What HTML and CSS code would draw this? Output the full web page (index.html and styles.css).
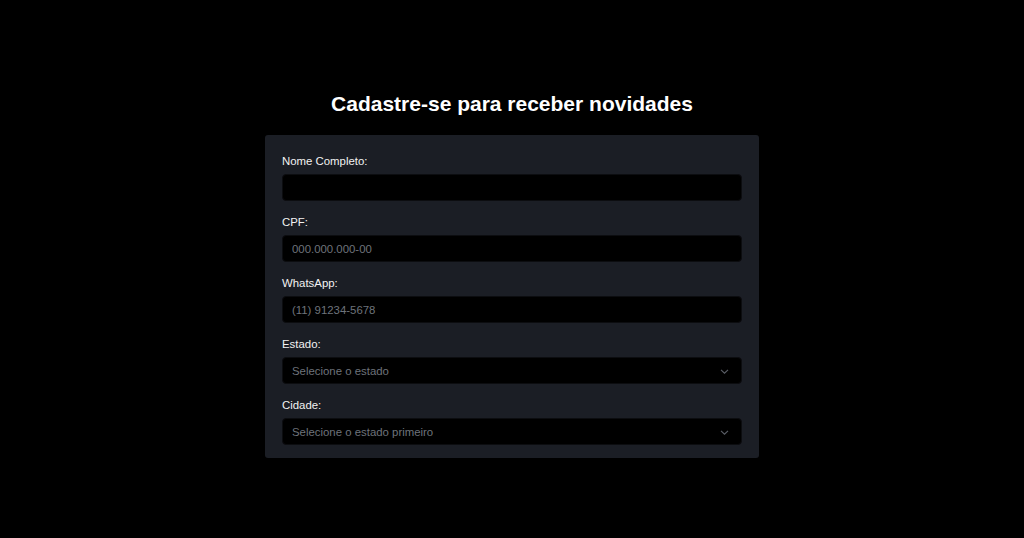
FILE: index.html
```html
<!DOCTYPE html>
<html lang="pt-BR">
<head>
  <meta charset="UTF-8">
  <meta name="viewport" content="width=device-width, initial-scale=1.0">
  <title>Cadastro</title>
  <link rel="stylesheet" href="styles.css">
</head>
<body>
  <main class="container">
    <h1>Cadastre-se para receber novidades</h1>
    <form class="card" id="formCadastro">
      <div class="field">
        <label for="nome">Nome Completo:</label>
        <input type="text" id="nome">
      </div>
      <div class="field">
        <label for="cpf">CPF:</label>
        <input type="text" id="cpf" placeholder="000.000.000-00">
      </div>
      <div class="field">
        <label for="whatsapp">WhatsApp:</label>
        <input type="text" id="whatsapp" placeholder="(11) 91234-5678">
      </div>
      <div class="field">
        <label for="estado">Estado:</label>
        <div class="select-wrap">
          <select id="estado">
            <option value="">Selecione o estado</option>
          </select>
          <svg class="chevron" width="9" height="5" viewBox="0 0 9 5"><path d="M1 0.8l3.5 3.4 3.5-3.4" fill="none" stroke="#5a5e66" stroke-width="1.1"/></svg>
        </div>
      </div>
      <div class="field">
        <label for="cidade">Cidade:</label>
        <div class="select-wrap">
          <select id="cidade">
            <option value="">Selecione o estado primeiro</option>
          </select>
          <svg class="chevron" width="9" height="5" viewBox="0 0 9 5"><path d="M1 0.8l3.5 3.4 3.5-3.4" fill="none" stroke="#5a5e66" stroke-width="1.1"/></svg>
        </div>
      </div>
    </form>
  </main>
</body>
</html>
```

FILE: styles.css
```css
body {
  margin: 0;
  background: #000;
  color: #fff;
  font-family: 'Liberation Sans', Arial, sans-serif;
}
.container {
  width: 494px;
  margin: 0 auto;
  padding-top: 92px;
}
h1 {
  margin: 0 0 19px;
  font-size: 21px;
  line-height: 24px;
  text-align: center;
  font-weight: bold;
}
.card {
  background: #1b1e25;
  border-radius: 3px;
  padding: 19px 17px 0;
  overflow: hidden;
}
.field {
  margin-bottom: 14px;
}
.field:last-child {
  margin-bottom: 13px;
}
.field label {
  display: block;
  font-size: 11.4px;
  line-height: 15px;
  margin-bottom: 5px;
  color: #f2f2f2;
}
.field input, .field select {
  display: block;
  width: 100%;
  box-sizing: border-box;
  height: 27px;
  padding: 0 9px;
  background: #000;
  border: 1px solid #0c0d10;
  border-radius: 4px;
  color: #ddd;
  font-family: inherit;
  font-size: 11.4px;
  outline: none;
}
.field input::placeholder {
  color: #6e737b;
}
.field select {
  appearance: none;
  -webkit-appearance: none;
  color: #6e737b;
}
.select-wrap {
  position: relative;
}
.chevron {
  position: absolute;
  right: 13px;
  top: 12px;
}
```
